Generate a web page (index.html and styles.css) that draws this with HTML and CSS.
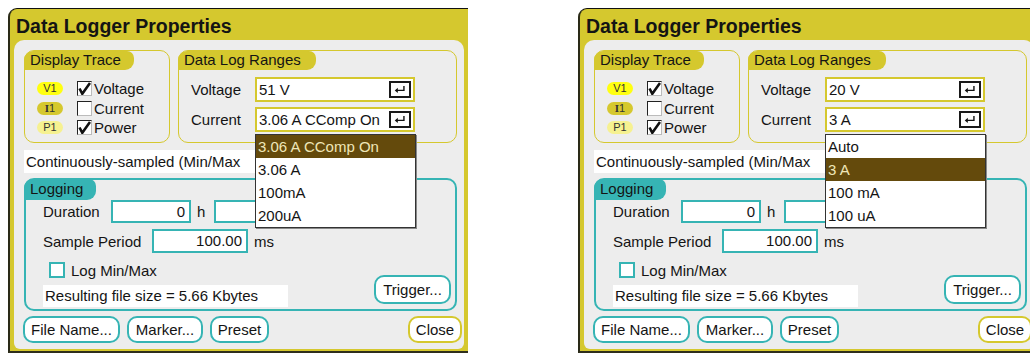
FILE: index.html
```html
<!DOCTYPE html>
<html>
<head>
<meta charset="utf-8">
<link rel="stylesheet" href="styles.css">
</head>
<body>
<div class="stage">

  <div class="panel">
    <div class="title">Data Logger Properties</div>
    <div class="inner">
      <div class="top-row">
        <div class="group trace">
          <div class="tab yellow-tab">Display Trace</div>
          <div class="trace-rows">
            <div class="trace-row"><span class="badge b-v">V1</span><span class="cb checked"><svg viewBox="0 0 13 13"><path d="M1.5 6.5 L4.3 11.8 L12 1" /></svg></span><span>Voltage</span></div>
            <div class="trace-row"><span class="badge b-i"><span class="serif">I</span>1</span><span class="cb"></span><span>Current</span></div>
            <div class="trace-row"><span class="badge b-p">P1</span><span class="cb checked"><svg viewBox="0 0 13 13"><path d="M1.5 6.5 L4.3 11.8 L12 1" /></svg></span><span>Power</span></div>
          </div>
        </div>
        <div class="group ranges">
          <div class="tab yellow-tab">Data Log Ranges</div>
          <div class="range-rows">
            <div class="range-row"><span class="rlabel">Voltage</span><div class="rinput"><span>51 V</span><span class="enter"><svg viewBox="0 0 16 12"><path d="M12.5 2 V7 H4" /><path class="head" d="M2 7 L5.5 4 V10 Z" /></svg></span></div></div>
            <div class="range-row"><span class="rlabel">Current</span><div class="rinput"><span>3.06 A CComp On</span><span class="enter"><svg viewBox="0 0 16 12"><path d="M12.5 2 V7 H4" /><path class="head" d="M2 7 L5.5 4 V10 Z" /></svg></span>
              <div class="dropdown">
                <div class="opt sel">3.06 A CComp On</div>
                <div class="opt">3.06 A</div>
                <div class="opt">100mA</div>
                <div class="opt">200uA</div>
              </div>
            </div></div>
          </div>
        </div>
      </div>
      <div class="status"><span class="status-text">Continuously-sampled (Min/Max</span></div>
      <div class="group logging">
        <div class="tab teal-tab">Logging</div>
        <div class="log-body">
          <div class="log-row"><span class="llabel dur">Duration</span><span class="tbox w80">0</span><span class="unit h">h</span><span class="tbox w60"></span></div>
          <div class="log-row"><span class="llabel sp">Sample Period</span><span class="tbox w96">100.00</span><span class="unit">ms</span></div>
          <div class="log-foot">
            <div class="foot-left">
              <div class="minmax"><span class="tcb"></span><span>Log Min/Max</span></div>
              <div class="filesize">Resulting file size = 5.66 Kbytes</div>
            </div>
            <span class="btn trigger">Trigger...</span>
          </div>
        </div>
      </div>
      <div class="buttons">
        <span class="btn">File Name...</span>
        <span class="btn">Marker...</span>
        <span class="btn">Preset</span>
        <span class="spacer"></span>
        <span class="btn close">Close</span>
      </div>
    </div>
  </div>

  <div class="panel">
    <div class="title">Data Logger Properties</div>
    <div class="inner">
      <div class="top-row">
        <div class="group trace">
          <div class="tab yellow-tab">Display Trace</div>
          <div class="trace-rows">
            <div class="trace-row"><span class="badge b-v">V1</span><span class="cb checked"><svg viewBox="0 0 13 13"><path d="M1.5 6.5 L4.3 11.8 L12 1" /></svg></span><span>Voltage</span></div>
            <div class="trace-row"><span class="badge b-i"><span class="serif">I</span>1</span><span class="cb"></span><span>Current</span></div>
            <div class="trace-row"><span class="badge b-p">P1</span><span class="cb checked"><svg viewBox="0 0 13 13"><path d="M1.5 6.5 L4.3 11.8 L12 1" /></svg></span><span>Power</span></div>
          </div>
        </div>
        <div class="group ranges">
          <div class="tab yellow-tab">Data Log Ranges</div>
          <div class="range-rows">
            <div class="range-row"><span class="rlabel">Voltage</span><div class="rinput"><span>20 V</span><span class="enter"><svg viewBox="0 0 16 12"><path d="M12.5 2 V7 H4" /><path class="head" d="M2 7 L5.5 4 V10 Z" /></svg></span></div></div>
            <div class="range-row"><span class="rlabel">Current</span><div class="rinput"><span>3 A</span><span class="enter"><svg viewBox="0 0 16 12"><path d="M12.5 2 V7 H4" /><path class="head" d="M2 7 L5.5 4 V10 Z" /></svg></span>
              <div class="dropdown">
                <div class="opt">Auto</div>
                <div class="opt sel">3 A</div>
                <div class="opt">100 mA</div>
                <div class="opt">100 uA</div>
              </div>
            </div></div>
          </div>
        </div>
      </div>
      <div class="status"><span class="status-text">Continuously-sampled (Min/Max</span></div>
      <div class="group logging">
        <div class="tab teal-tab">Logging</div>
        <div class="log-body">
          <div class="log-row"><span class="llabel dur">Duration</span><span class="tbox w80">0</span><span class="unit h">h</span><span class="tbox w60"></span></div>
          <div class="log-row"><span class="llabel sp">Sample Period</span><span class="tbox w96">100.00</span><span class="unit">ms</span></div>
          <div class="log-foot">
            <div class="foot-left">
              <div class="minmax"><span class="tcb"></span><span>Log Min/Max</span></div>
              <div class="filesize">Resulting file size = 5.66 Kbytes</div>
            </div>
            <span class="btn trigger">Trigger...</span>
          </div>
        </div>
      </div>
      <div class="buttons">
        <span class="btn">File Name...</span>
        <span class="btn">Marker...</span>
        <span class="btn">Preset</span>
        <span class="spacer"></span>
        <span class="btn close">Close</span>
      </div>
    </div>
  </div>

</div>
</body>
</html>
```

FILE: styles.css
```css
* { box-sizing: border-box; }
html, body { margin: 0; padding: 0; background: #ffffff; }
body {
  width: 1030px;
  height: 354px;
  overflow: hidden;
  font-family: "Liberation Sans", Arial, sans-serif;
  font-size: 15px;
  color: #141414;
}
.stage {
  display: flex;
  gap: 110px;
  padding: 8px 0 0 8px;
}
.panel {
  flex: 0 0 460px;
  width: 460px;
  height: 345px;
  background: #d5c82e;
  border-top: 1px solid #111;
  border-left: 2px solid #2a2a18;
  border-bottom: 2px solid #2e2e1c;
  border-top-left-radius: 9px;
  display: flex;
  flex-direction: column;
}
.title {
  height: 31px;
  padding: 7px 0 0 6px;
  font-weight: bold;
  font-size: 19.5px;
  line-height: 20px;
  color: #141414;
  white-space: nowrap;
}
.inner {
  flex: 1;
  margin: 0 4px 2px 4px;
  background: #ededed;
  border-radius: 10px 10px 6px 6px;
  padding: 10px 0 0 10px;
  display: flex;
  flex-direction: column;
}
.top-row {
  display: flex;
  gap: 8px;
  height: 93px;
}
.group {
  border-radius: 10px;
  position: relative;
}
.trace, .ranges { border: 1.5px solid #d5c82e; }
.trace { width: 146px; }
.ranges { width: 279px; }
.tab {
  height: 19px;
  line-height: 18px;
  padding: 0 8px 0 6px;
  display: inline-block;
  border-radius: 9px 7px 9px 0;
  white-space: nowrap;
  margin: -1px 0 0 -1px;
}
.yellow-tab { background: #d5c82e; }
.trace .tab { width: 110px; }
.ranges .tab { width: 138px; }
.teal-tab { background: #36b4b4; height: 21px; line-height: 20px; width: 72px; }

.trace-rows { padding: 9px 0 0 12px; }
.trace-row {
  height: 19.5px;
  display: flex;
  align-items: center;
}
.badge {
  width: 26px;
  height: 13px;
  border-radius: 7px;
  font-size: 11px;
  line-height: 13px;
  text-align: center;
  color: #333;
  margin-right: 14px;
}
.serif { font-family: "Liberation Serif", serif; font-weight: bold; }
.b-v { background: #ffff10; }
.b-i { background: #d5c82e; }
.b-p { background: #f6f190; }
.cb {
  width: 15px;
  height: 15px;
  background: #fff;
  border: 1px solid #bbb;
  border-top-color: #222;
  border-left-color: #222;
  margin-right: 2px;
  display: flex;
}
.cb svg { width: 13px; height: 13px; }
.cb svg path { fill: none; stroke: #111; stroke-width: 2.6; stroke-linejoin: miter; stroke-linecap: butt; }

.range-rows { padding: 7px 0 0 12px; display: flex; flex-direction: column; gap: 5px; }
.range-row { display: flex; align-items: center; height: 25px; }
.rlabel { width: 64px; }
.rinput {
  position: relative;
  width: 160px;
  height: 25px;
  background: #fff;
  border: 2px solid #d5c82e;
  display: flex;
  align-items: center;
  justify-content: space-between;
  padding: 0 2px 0 2px;
  white-space: nowrap;
}
.enter {
  width: 22px;
  height: 17px;
  border: 2px solid #1a1a1a;
  background: #fff;
  display: flex;
  align-items: center;
  justify-content: center;
}
.enter svg { width: 14px; height: 11px; }
.enter svg path { fill: none; stroke: #111; stroke-width: 1.6; }
.enter svg path.head { fill: #111; stroke: none; }

.dropdown {
  position: absolute;
  top: 25px;
  left: -2px;
  width: 161px;
  background: #fff;
  border: 1px solid #333;
  box-shadow: 1px 1px 0 #888;
  z-index: 5;
}
.opt {
  height: 23px;
  line-height: 23px;
  padding-left: 2px;
  color: #141414;
}
.opt.sel { background: #644a0c; color: #efe6b8; }

.status {
  margin-top: 7px;
  height: 23px;
  line-height: 23px;
  width: 231px;
  background: #fff;
  padding-left: 2px;
  white-space: nowrap;
  overflow: hidden;
}
.logging {
  margin-top: 5px;
  width: 433px;
  height: 133px;
  border: 2px solid #36b4b4;
}
.logging .tab { margin: -2px 0 0 -2px; }
.log-body { padding: 0 0 0 17px; display: flex; flex-direction: column; height: 110px; }
.log-row { display: flex; align-items: center; height: 23px; flex: 0 0 auto; }
.log-row + .log-row { margin-top: 6px; height: 24px; }
.llabel.dur { width: 68px; }
.llabel.sp { width: 109px; }
.tbox {
  height: 100%;
  background: #fff;
  border: 2px solid #36b4b4;
  text-align: right;
  padding-right: 4px;
  line-height: 19px;
}
.w80 { width: 80px; }
.w60 { width: 60px; }
.w96 { width: 96px; }
.unit { margin: 0 7px 0 6px; }
.unit.h { margin-right: 9px; }
.log-foot { display: flex; flex: 1; justify-content: space-between; padding-right: 4px; }
.foot-left { display: flex; flex-direction: column; padding-top: 9px; }
.minmax { display: flex; align-items: center; height: 16px; margin-left: 6px; gap: 6px; }
.tcb { width: 16px; height: 16px; background: #fff; border: 2px solid #36b4b4; }
.filesize {
  margin-top: 7px;
  width: 245px;
  height: 22px;
  line-height: 22px;
  background: #fff;
  padding-left: 2px;
  white-space: nowrap;
}
.btn {
  display: inline-flex;
  align-items: center;
  justify-content: center;
  height: 27px;
  background: #fff;
  border: 2px solid #36b4b4;
  border-radius: 10px;
  padding: 0 6px;
  white-space: nowrap;
}
.trigger { width: 77px; height: 29px; align-self: flex-end; margin-bottom: 6px; }
.buttons {
  margin-top: 5px;
  margin-left: -1px;
  display: flex;
  gap: 7px;
  width: 439px;
}
.buttons .btn:nth-child(1) { width: 97px; }
.buttons .btn:nth-child(2) { width: 76px; }
.buttons .btn:nth-child(3) { width: 59px; }
.spacer { flex: 1; }
.btn.close { border-color: #d5c82e; width: 54px; }
```
